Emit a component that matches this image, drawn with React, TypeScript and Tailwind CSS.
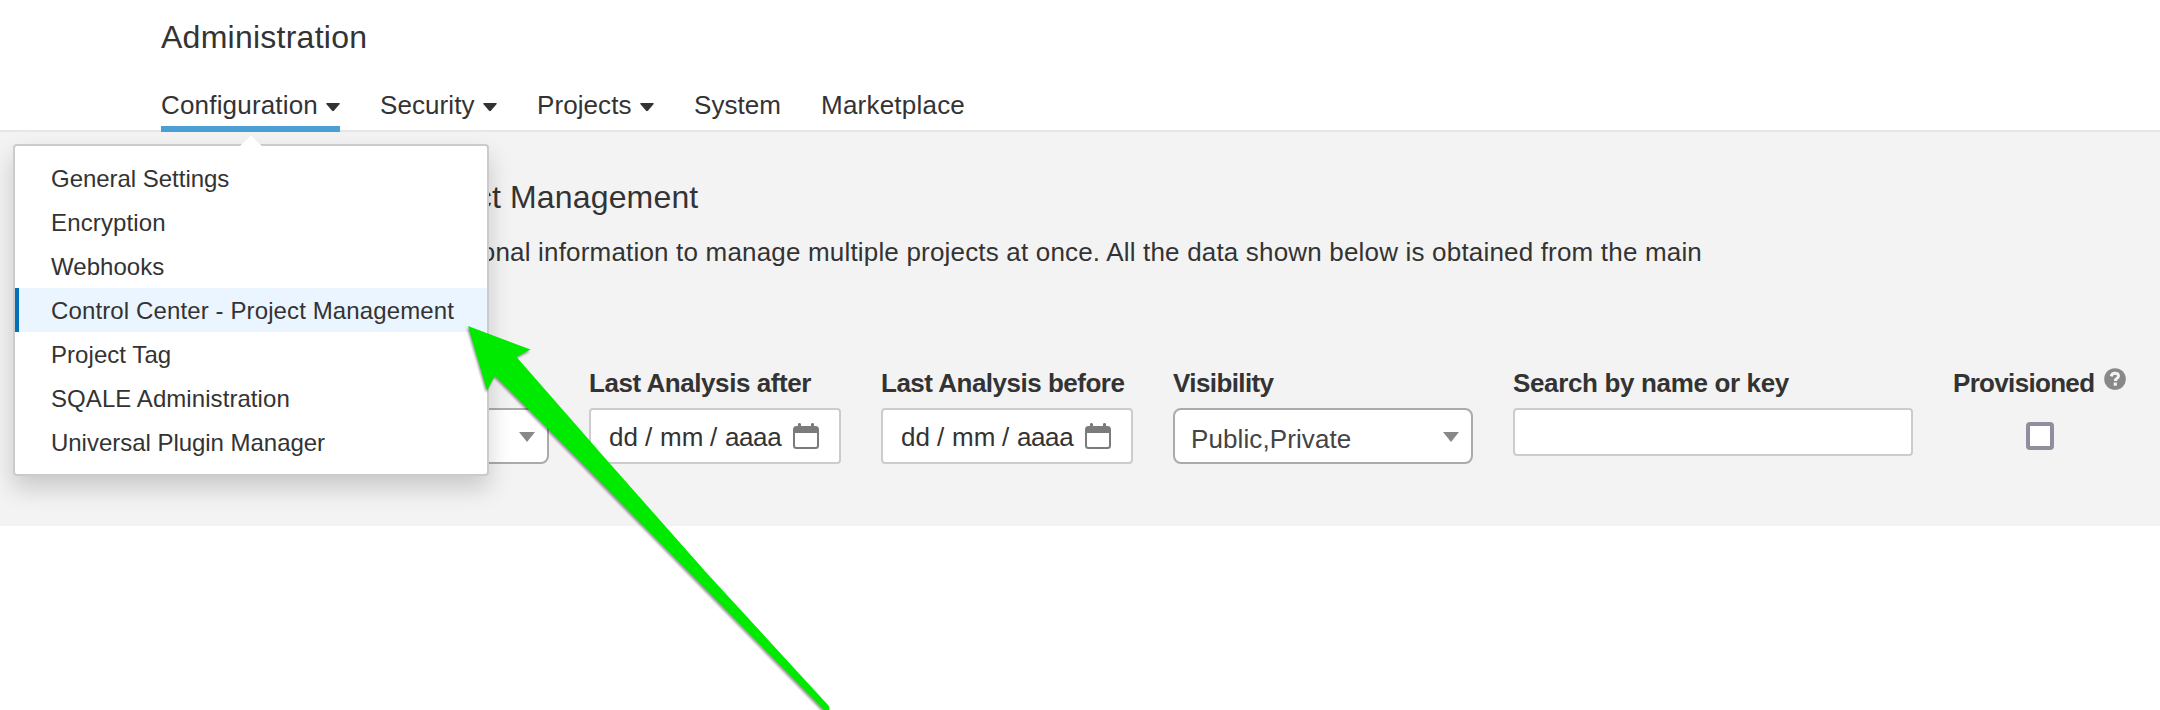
import React from "react";

const NAV = [
  { label: "Configuration", caret: true, active: true, width: "w-[179px]", tracking: "tracking-[0.18px]" },
  { label: "Security", caret: true, width: "w-[117px]", tracking: "tracking-[0.08px]" },
  { label: "Projects", caret: true, width: "w-[117px]", tracking: "tracking-[0.08px]" },
  { label: "System", width: "w-[87px]", tracking: "tracking-[0.05px]" },
  { label: "Marketplace", width: "w-[145px]", tracking: "tracking-[0.22px]" },
];

const MENU = [
  { label: "General Settings", tracking: "tracking-[-0.03px]" },
  { label: "Encryption", tracking: "tracking-[0.14px]" },
  { label: "Webhooks", tracking: "tracking-[0.05px]" },
  { label: "Control Center - Project Management", active: true, tracking: "tracking-[0.12px]" },
  { label: "Project Tag", tracking: "tracking-[0.05px]" },
  { label: "SQALE Administration", tracking: "tracking-[0.07px]" },
  { label: "Universal Plugin Manager", tracking: "tracking-[-0.03px]" },
];

function NavCaret() {
  return (
    <svg className="mt-[3px] block" width="14" height="9" viewBox="0 0 14 9">
      <path d="M1 0h12q1.200 0 .7 1L7.900 7.800q-.9 .9-1.800 0L.3 1Q-.2 0 1 0z" fill="#333" />
    </svg>
  );
}

function SelectCaret() {
  return (
    <svg className="mt-[2px] block" width="16" height="10" viewBox="0 0 16 10">
      <path d="M0 0h16L8 10z" fill="#888" />
    </svg>
  );
}

function CalendarIcon() {
  return (
    <svg className="block" width="26" height="26" viewBox="0 0 26 26">
      <path
        fillRule="evenodd"
        fill="#7b7b7b"
        d="M5 1.2Q5 0 6.4 0T8 1.2V3h10V1.2Q18 0 19.5 0T21 1.2V3h1.5Q26 3 26 6.5v16q0 3.500-3.500 3.500h-19Q0 26 0 22.500v-16Q0 3 3.500 3H5zM2 10v12.500Q2 24 3.500 24h19q1.500 0 1.500-1.500V10z"
      />
    </svg>
  );
}

function Label({ children, tracking }: { children: React.ReactNode; tracking: string }) {
  return <div className={"h-[40px] whitespace-nowrap text-[26px] font-bold leading-[30px] text-[#333] " + tracking}>{children}</div>;
}

function DateField({ label, tracking }: { label: string; tracking: string }) {
  return (
    <div className="w-[252px]">
      <Label tracking={tracking}>{label}</Label>
      <div className="flex h-[56px] items-center rounded-[4px] border-2 border-[#ccc] bg-white pl-[18px] text-[26px] leading-[30px] text-[#333]">
        <div className="flex w-[184px] pt-px">
          <span className="w-[36px]">dd</span>
          <span className="w-[15px]">/</span>
          <span className="w-[50px]">mm</span>
          <span className="w-[15px]">/</span>
          <span className="tracking-[-0.4px]">aaaa</span>
        </div>
        <CalendarIcon />
      </div>
    </div>
  );
}

function Select({ label, value }: { label?: string; value?: string }) {
  return (
    <div className="w-[300px]">
      <Label tracking="tracking-[-0.6px]">{label}</Label>
      <div className="flex h-[56px] items-center justify-between rounded-[8px] border-2 border-[#aaa] bg-white pl-[16px] pr-[12px] text-[26px] leading-[30px] text-[#444]">
        <span className="pt-[5px] tracking-[0.1px]">{value}</span>
        <SelectCaret />
      </div>
    </div>
  );
}

export default function App() {
  return (
    <div className="relative h-[710px] w-[2160px] overflow-hidden bg-white font-['Liberation_Sans',Arial,sans-serif] text-[#333]">
      <header className="flex h-[132px] flex-col justify-between border-b-2 border-[#e6e6e6] pl-[161px]">
        <h1 className="pt-[19px] text-[32px] leading-[36px] tracking-[0.25px]">Administration</h1>
        <nav className="-mb-[2px] flex gap-[40px]">
          {NAV.map((item) => (
            <a
              key={item.label}
              className={
                "flex h-[44px] shrink-0 justify-between whitespace-nowrap border-b-[6px] text-[26px] leading-[34px] " +
                item.width +
                (item.active ? " border-[#4b9fd5]" : " border-transparent")
              }
            >
              <span className={item.tracking}>{item.label}</span>
              {item.caret && <span className="pt-[12px]"><NavCaret /></span>}
            </a>
          ))}
        </nav>
      </header>

      <main className="h-[394px] bg-[#f3f3f3] pt-[46px]">
        <h2 className="h-[54px] pl-[161px] text-[32px] leading-[38px] tracking-[0.16px]">Control Center - Project Management</h2>
        <p className="h-[136px] w-[1702px] whitespace-nowrap pt-px text-right text-[26px] leading-[38px] tracking-[0.18px]">
          additional information to manage multiple projects at once. All the data shown below is obtained from the main
        </p>
        <div className="flex gap-[40px] pl-[249px]">
          <Select />
          <DateField label="Last Analysis after" tracking="tracking-[-0.44px]" />
          <DateField label="Last Analysis before" tracking="tracking-[-0.5px]" />
          <Select label="Visibility" value="Public,Private" />
          <div className="w-[400px]">
            <Label tracking="tracking-[-0.35px]">Search by name or key</Label>
            <div className="h-[48px] rounded-[4px] border-2 border-[#ccc] bg-white" />
          </div>
          <div className="w-[174px]">
            <div className="flex justify-between">
              <Label tracking="tracking-[-0.68px]">Provisioned</Label>
              <svg className="mr-[1px] block shrink-0" width="22" height="22" viewBox="0 0 22 22">
                <circle cx="11" cy="11" r="10.800" fill="#888" />
                <path d="M7.200 8.400Q7.800 5.200 11 5.200q3.500 0 3.500 2.800 0 1.500-1.700 2.600-1.500.9-1.500 2.400" fill="none" stroke="#f3f3f3" strokeWidth="3" />
                <rect x="9.700" y="14.500" width="3.200" height="3.200" fill="#f3f3f3" />
              </svg>
            </div>
            <div className="mx-auto mt-[14px] h-[28px] w-[28px] rounded-[4px] border-4 border-[#8f8d9e] bg-white" />
          </div>
        </div>
      </main>

      <div className="absolute left-[13px] top-[144px] h-[332px] w-[476px] rounded-[4px] border-2 border-[#cbcbcb] bg-white py-[10px] shadow-[0_12px_24px_rgba(0,0,0,0.175)]">
        <svg className="absolute left-[222px] top-[-11px]" width="28" height="12" viewBox="0 0 28 12">
          <path d="M2 12L14 0.500L26 12z" fill="#fff" />
        </svg>
        {MENU.map((item) => (
          <div
            key={item.label}
            className={
              "h-[44px] whitespace-nowrap border-l-4 pl-[32px] text-[24px] leading-[46px] " +
              item.tracking +
              (item.active ? " border-[#0271b9] bg-[#ebf5ff]" : " border-transparent")
            }
          >
            {item.label}
          </div>
        ))}
      </div>

      <svg className="absolute left-[450px] top-[310px] drop-shadow-[-1px_2px_1px_rgba(0,0,0,0.4)]" width="400" height="400" viewBox="450 310 400 400">
        <path d="M468 326L530.500 349.500L516.500 357L606.700 460L706.700 573L828 705Q831 708.500 828 711H825L579 460L495 375.500L487 390.500z" fill="#00ea00" />
      </svg>
    </div>
  );
}
